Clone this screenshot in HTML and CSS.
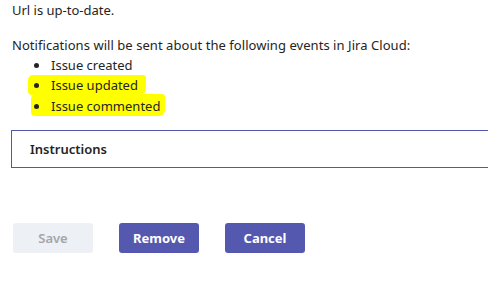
FILE: index.html
```html
<!DOCTYPE html>
<html lang="en">
<head>
  <meta charset="UTF-8">
  <meta name="viewport" content="width=device-width, initial-scale=1.0">
  <title>Jira Cloud connector</title>
  <link rel="stylesheet" href="styles.css">
</head>
<body>
  <div id="pagina">
    <p class="linha">Url is up-to-date.</p>

    <p class="linha aviso">Notifications will be sent about the following events in Jira Cloud:</p>
    <ul class="eventos">
      <li><span class="item"><span class="bola"></span>Issue created</span></li>
      <li><span class="item marca marca-1"><span class="bola"></span>Issue updated</span></li>
      <li><span class="item marca marca-2"><span class="bola"></span>Issue commented</span></li>
    </ul>

    <div class="caixa">
      <span class="caixa-titulo">Instructions</span>
    </div>

    <div class="botoes">
      <button class="botao botao-off">Save</button>
      <button class="botao">Remove</button>
      <button class="botao">Cancel</button>
    </div>
  </div>
</body>
</html>
```

FILE: styles.css
```css
* {
  margin: 0;
  padding: 0;
  box-sizing: border-box;
}

body {
  background: #ffffff;
  color: #252423;
  font-family: "Noto Sans", "Open Sans", sans-serif;
  font-size: 13px;
  overflow: hidden;
}

#pagina {
  padding-left: 12px;
}

.linha {
  height: 20px;
  line-height: 20px;
  white-space: nowrap;
}

.aviso {
  margin-top: 15px;
  letter-spacing: 0.05px;
}

.eventos {
  list-style: none;
  margin-bottom: 15px;
}

.eventos li {
  display: flex;
  align-items: center;
  height: 20px;
  padding-left: 22px;
  white-space: nowrap;
}

.item {
  display: flex;
  align-items: center;
  height: 20px;
}

.bola {
  width: 5px;
  height: 5px;
  border-radius: 50%;
  background: #252423;
  margin-right: 12px;
}

.marca {
  background: #ffff00;
  border-radius: 5px 3px 6px 4px;
}

.marca-1 {
  margin-left: -6px;
  padding: 0 8px 0 6px;
}

.marca-2 {
  margin-left: -3px;
  padding: 2px 5px 0 3px;
  height: 22px;
}

.caixa {
  margin-left: -1px;
  width: 477px;
  height: 38px;
  border: 1px solid #5257a8;
  border-right: none;
  padding-left: 18px;
  display: flex;
  align-items: center;
}

.caixa-titulo {
  font-weight: 600;
}

.botoes {
  display: flex;
  gap: 26px;
  margin-top: 55px;
  margin-left: 1px;
}

.botao {
  width: 80px;
  height: 30px;
  border: none;
  border-radius: 3px;
  background: #5558af;
  color: #ffffff;
  font-family: "Noto Sans", "Open Sans", sans-serif;
  font-size: 13px;
  font-weight: 700;
}

.botao-off {
  background: #edf0f5;
  color: #a3a5ab;
  font-weight: 600;
}
```
